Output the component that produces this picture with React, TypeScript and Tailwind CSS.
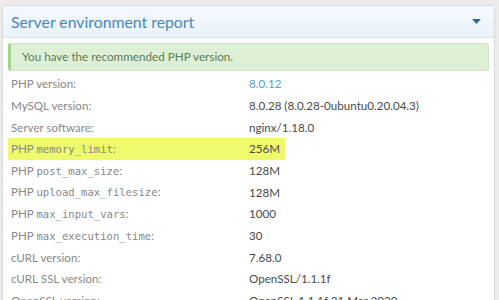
const rows: { label: string; code?: string; value: string; link?: boolean; mark?: boolean }[] = [
  { label: "PHP version:", value: "8.0.12", link: true },
  { label: "MySQL version:", value: "8.0.28 (8.0.28-0ubuntu0.20.04.3)" },
  { label: "Server software:", value: "nginx/1.18.0" },
  { label: "PHP ", code: "memory_limit", value: "256M", mark: true },
  { label: "PHP ", code: "post_max_size", value: "128M" },
  { label: "PHP ", code: "upload_max_filesize", value: "128M" },
  { label: "PHP ", code: "max_input_vars", value: "1000" },
  { label: "PHP ", code: "max_execution_time", value: "30" },
  { label: "cURL version:", value: "7.68.0" },
  { label: "cURL SSL version:", value: "OpenSSL/1.1.1f" },
  { label: "OpenSSL version:", value: "OpenSSL 1.1.1f 31 Mar 2020" },
];

const App = () => {
  return (
    <div className="h-[300px] overflow-hidden bg-[#ebebeb] pt-[5px] pl-[2px] pr-[4px] font-['Lato',sans-serif]">
      <div className="bg-white border border-[#dadada] rounded-t-[3px]">
        <div className="h-[32px] flex items-center justify-between pl-[8px] pr-[13px] bg-gradient-to-b from-[#f4f9fe] to-[#eaf3fb] border-b border-[#dde6ee]">
          <h2 className="text-[15.8px] text-[#4a87bd]">Server environment report</h2>
          <svg width="9" height="5" viewBox="0 0 9 5">
            <path d="M0 0 L9 0 L4.5 5 Z" fill="#2d6a9f" />
          </svg>
        </div>
        <div className="mx-[5px] mt-[5px] h-[28px] flex items-center pl-[11px] bg-[#ddf0d6] border border-[#cfe6c7] border-l-[3px] border-l-[#9fd48f] rounded-[3px] text-[11.7px] text-[#5e7b57]">
          You have the recommended PHP version.
        </div>
        <div className="pt-[2px] px-[5px]">
          {rows.map((r, i) => (
            <div key={i} className="h-[21.7px] flex items-center text-[11.6px]">
              <div className={"w-[277px] h-full flex items-center pl-[3px] " + (r.mark ? "bg-[#eef96b]" : "")}>
                <div className="w-[238px] shrink-0 text-[#888888] whitespace-nowrap">
                  {r.label}
                  {r.code && <span className="font-['DejaVu_Sans_Mono',monospace] text-[10.6px]">{r.code}</span>}
                  {r.code && ":"}
                </div>
                <div className={"whitespace-nowrap " + (r.link ? "text-[#5a9bd0]" : "text-[#4a4a4a]")}>{r.value}</div>
              </div>
            </div>
          ))}
        </div>
      </div>
    </div>
  );
};

export default App;
